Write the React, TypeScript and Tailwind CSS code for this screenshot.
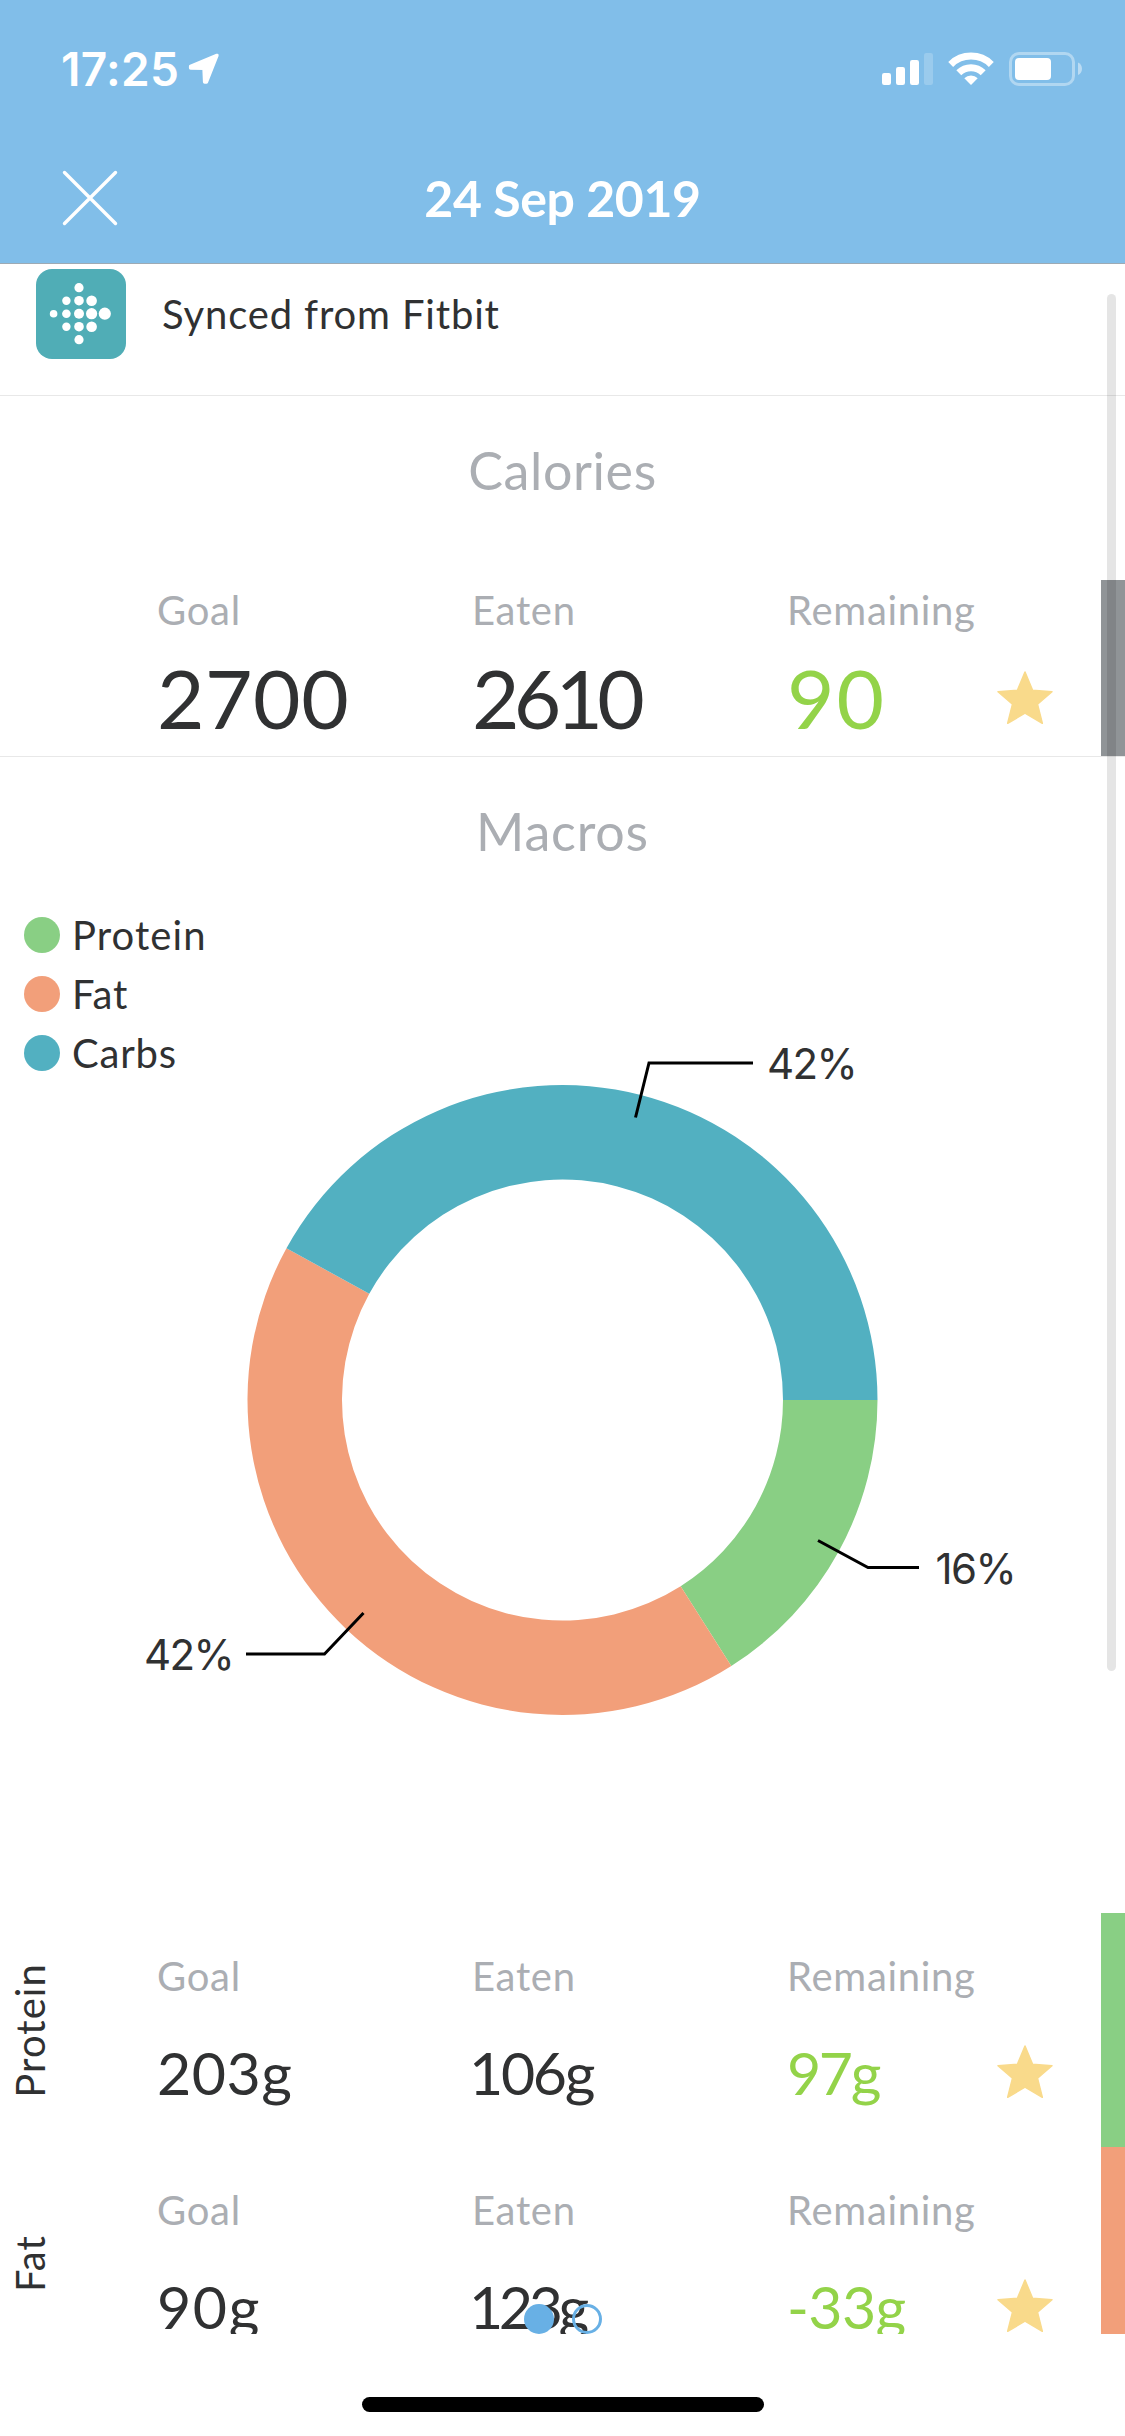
import { clsx } from 'clsx';

interface Stat {
  label: string;
  value: string;
  spacing: string;
}

interface Macro {
  name: string;
  stats: Stat[];
  barColor: string;
}

const calories: Stat[] = [
  { label: 'Goal', value: '2700', spacing: 'tracking-[0.5px]' },
  { label: 'Eaten', value: '2610', spacing: 'tracking-[-5.8px]' },
  { label: 'Remaining', value: '90', spacing: 'tracking-[2px]' },
];

const macros: Macro[] = [
  {
    name: 'Protein',
    barColor: 'bg-[#89cf84]',
    stats: [
      { label: 'Goal', value: '203g', spacing: 'tracking-[0.5px]' },
      { label: 'Eaten', value: '106g', spacing: '-ml-[3px] tracking-[-2.3px]' },
      { label: 'Remaining', value: '97g', spacing: 'tracking-[-2.4px]' },
    ],
  },
  {
    name: 'Fat',
    barColor: 'bg-[#f29f7a]',
    stats: [
      { label: 'Goal', value: '90g', spacing: 'tracking-[1.6px]' },
      { label: 'Eaten', value: '123g', spacing: '-ml-[3px] tracking-[-4.4px]' },
      { label: 'Remaining', value: '-33g', spacing: 'tracking-[-0.6px]' },
    ],
  },
];

const legend = [
  { name: 'Protein', color: 'bg-[#89cf84]', tracking: 'tracking-[1.1px]' },
  { name: 'Fat', color: 'bg-[#f29f7a]', tracking: 'tracking-[0.8px]' },
  { name: 'Carbs', color: 'bg-[#52b0c1]', tracking: 'tracking-[0.8px]' },
];

// angles in degrees, clockwise from three o'clock
const slices = [
  { name: 'Protein', from: 0, to: 57.6, color: '#89cf84' },
  { name: 'Fat', from: 57.6, to: 208.8, color: '#f29f7a' },
  { name: 'Carbs', from: 208.8, to: 360, color: '#52b0c1' },
];

const callouts = [
  { text: '42%', x: 767, y: 181.5, line: '635.5,220.5 649,166 753,166' },
  { text: '16%', x: 935.5, y: 686.5, line: '818,643.5 868,670.5 919,670.5' },
  { text: '42%', x: 144, y: 772.5, line: '363.5,716 324.5,757 246,757' },
];

const fitbitDots = [
  [43, 18.7, 4.6],
  [30.4, 31.7, 4.2], [43, 31.7, 4.8], [55.6, 31.7, 5.3],
  [17.6, 44.7, 3.8], [30.4, 44.7, 4.3], [43, 44.7, 5], [55.6, 44.7, 5.6], [68.8, 44.7, 6.1],
  [30.4, 57.7, 4.2], [43, 57.7, 4.8], [55.6, 57.7, 5.3],
  [43, 70.7, 4.6],
];

function slicePath(from: number, to: number) {
  const cx = 562.5;
  const cy = 503;
  const outer = 315;
  const inner = 220.5;
  const point = (r: number, deg: number) => {
    const a = (deg * Math.PI) / 180;
    return `${(cx + r * Math.cos(a)).toFixed(2)} ${(cy + r * Math.sin(a)).toFixed(2)}`;
  };
  return `M${point(outer, from)} A${outer} ${outer} 0 0 1 ${point(outer, to)} L${point(inner, to)} A${inner} ${inner} 0 0 0 ${point(inner, from)} Z`;
}

function Star() {
  return (
    <svg width="56" height="54" viewBox="0 0 56 54" fill="#f9da8b" stroke="#f9da8b" strokeWidth="1.5" strokeLinejoin="round">
      <path d="M28 1 L35.6 19.3 L55 20.8 L40.5 33.2 L45.3 52.3 L28 42.2 L10.7 52.3 L15.5 33.2 L1 20.8 L20.4 19.3 Z" />
    </svg>
  );
}

function StatusBar() {
  return (
    <div className="flex items-start pt-[52px] pl-[61px] pr-[43px] h-[132px]">
      <span className="font-['Inter',sans-serif] font-semibold text-[46px] leading-[34px] tracking-[0.3px]">17:25</span>
      <svg className="ml-[9px]" width="32" height="32" viewBox="0 0 32 32" fill="#fff" stroke="#fff" strokeWidth="3.4" strokeLinejoin="round">
        <path d="M29 3.4 L2.6 14.4 L2.6 16 L16 16.2 L16.6 30 L18.4 30 Z" />
      </svg>
      <div className="flex items-start ml-auto">
        <svg width="52" height="34" viewBox="0 0 52 34" fill="#fff">
          <rect x="0" y="21" width="9" height="12" rx="2.2" />
          <rect x="14" y="15" width="9" height="18" rx="2.2" />
          <rect x="28" y="8" width="9" height="25" rx="2.2" />
          <rect x="42" y="1" width="9" height="32" rx="2.2" opacity="0.2" />
        </svg>
        <svg className="ml-[14px]" width="46" height="34" viewBox="0 0 46 34" fill="none" stroke="#fff" strokeWidth="7">
          <path d="M2.7 12.4 A29 29 0 0 1 43.3 12.4" />
          <path d="M10.8 20.7 A17.4 17.4 0 0 1 35.2 20.7" />
          <path d="M16.3 26.2 A9.5 9.5 0 0 1 29.7 26.2 L23 33 Z" fill="#fff" stroke="none" />
        </svg>
        <svg className="ml-[15px]" width="73" height="34" viewBox="0 0 73 34" fill="#fff">
          <rect x="1.5" y="1.5" width="63" height="31" rx="8.5" fill="none" stroke="#fff" strokeWidth="3" opacity="0.38" />
          <rect x="6" y="6" width="36" height="22" rx="4" />
          <path d="M69 10.5 C74.3 12.5 74.3 21 69 23 Z" opacity="0.45" />
        </svg>
      </div>
    </div>
  );
}

function StatRow({ stats, large }: { stats: Stat[]; large?: boolean }) {
  return (
    <div className="grid grid-cols-[315px_315px_210px]">
      {stats.map((stat) => (
        <div key={stat.label}>
          <div className="text-[40px] leading-[48px] tracking-[0.7px] text-[#abaeb3]">{stat.label}</div>
          <div
            className={clsx(
              large ? 'mt-3.5 text-[82px] leading-[98px]' : 'mt-[38px] text-[59px] leading-[70px]',
              stat.label === 'Remaining' ? 'text-[#93d349]' : 'text-[#303132]',
              stat.spacing
            )}
          >
            {stat.value}
          </div>
        </div>
      ))}
    </div>
  );
}

export default function App() {
  return (
    <div className="relative w-[1125px] h-[2436px] overflow-hidden bg-white font-['Lato',sans-serif] text-[#303132]">
      <header className="h-[264px] bg-[#81bee9] border-b border-[#9daab4] text-white">
        <StatusBar />
        <div className="grid grid-cols-[1fr_auto_1fr] items-center h-[132px]">
          <button className="ml-[62px] w-14 h-14" aria-label="Close">
            <svg width="56" height="56" viewBox="0 0 56 56" stroke="#fff" strokeWidth="3.4" strokeLinecap="round">
              <path d="M2.5 2.5 L53.5 53.5 M53.5 2.5 L2.5 53.5" />
            </svg>
          </button>
          <h1 className="font-bold text-[50px] leading-[60px] tracking-[-0.4px]">24 Sep 2019</h1>
        </div>
      </header>

      <main className="h-[2070px] overflow-hidden">
        <div className="flex items-start h-[132px] pt-[5px] pl-9 border-b border-[#e8e8e8]">
          <svg width="90" height="90" viewBox="0 0 90 90">
            <rect width="90" height="90" rx="16" fill="#50adb6" />
            {fitbitDots.map(([cx, cy, r]) => (
              <circle key={`${cx}-${cy}`} cx={cx} cy={cy} r={r} fill="#fff" />
            ))}
          </svg>
          <span className="ml-9 mt-[21px] text-[40px] leading-[48px] tracking-[0.85px]">Synced from Fitbit</span>
        </div>

        <section className="h-[361px] border-b border-[#e8e8e8]">
          <h2 className="pt-[43px] h-[184px] text-center text-[52px] leading-[62px] tracking-[0.6px] text-[#abaeb3]">Calories</h2>
          <div className="flex h-44 pl-[157px]">
            <div className="pt-1.5">
              <StatRow stats={calories} large />
            </div>
            <div className="pt-[91px]">
              <Star />
            </div>
            <div className="ml-auto w-6 bg-[#909497]" />
          </div>
        </section>

        <section>
          <h2 className="pt-[43px] h-[140px] text-center text-[52px] leading-[62px] tracking-[0.8px] text-[#abaeb3]">Macros</h2>
          <div className="relative h-[1016px]">
            <svg width="1125" height="1016" viewBox="0 0 1125 1016">
              {slices.map((slice) => (
                <path key={slice.name} d={slicePath(slice.from, slice.to)} fill={slice.color} />
              ))}
              {callouts.map((c) => (
                <g key={c.line}>
                  <polyline points={c.line} fill="none" stroke="#000" strokeWidth="3" />
                  <text x={c.x} y={c.y} className="font-['Inter',sans-serif] text-[42px] tracking-[-1.6px]" fill="#303132">
                    {c.text}
                  </text>
                </g>
              ))}
            </svg>
            <ul className="absolute top-3.5 left-6 flex flex-col gap-[11px]">
              {legend.map((item) => (
                <li key={item.name} className="flex items-center h-12">
                  <span className={clsx('w-9 h-9 rounded-full', item.color)} />
                  <span className={clsx('ml-3 text-[40px] leading-[48px]', item.tracking)}>{item.name}</span>
                </li>
              ))}
            </ul>
          </div>

          {macros.map((macro) => (
            <div key={macro.name} className="flex h-[234px]">
              <div className="flex items-center justify-center w-[157px] pr-[98px]">
                <span className="[writing-mode:vertical-rl] rotate-180 text-[40px] leading-[48px] tracking-[1.1px]">{macro.name}</span>
              </div>
              <div className="pt-[39px]">
                <StatRow stats={macro.stats} />
              </div>
              <div className="pt-[132px]">
                <Star />
              </div>
              <div className={clsx('ml-auto w-6', macro.barColor)} />
            </div>
          ))}
        </section>
      </main>

      {/* pager dots float over the scrolled content */}
      <div className="absolute top-[2304px] left-[524px] flex gap-[18px]">
        <span className="w-[30px] h-[30px] rounded-full bg-[#68b0e5]" />
        <span className="w-[30px] h-[30px] rounded-full border-3 border-[#68b0e5]" />
      </div>

      <div className="absolute top-[294px] right-[9px] w-[9px] h-[1377px] rounded-full bg-black/10" />

      <footer className="flex justify-center pt-[63px]">
        <div className="w-[402px] h-[15px] rounded-full bg-black" />
      </footer>
    </div>
  );
}
